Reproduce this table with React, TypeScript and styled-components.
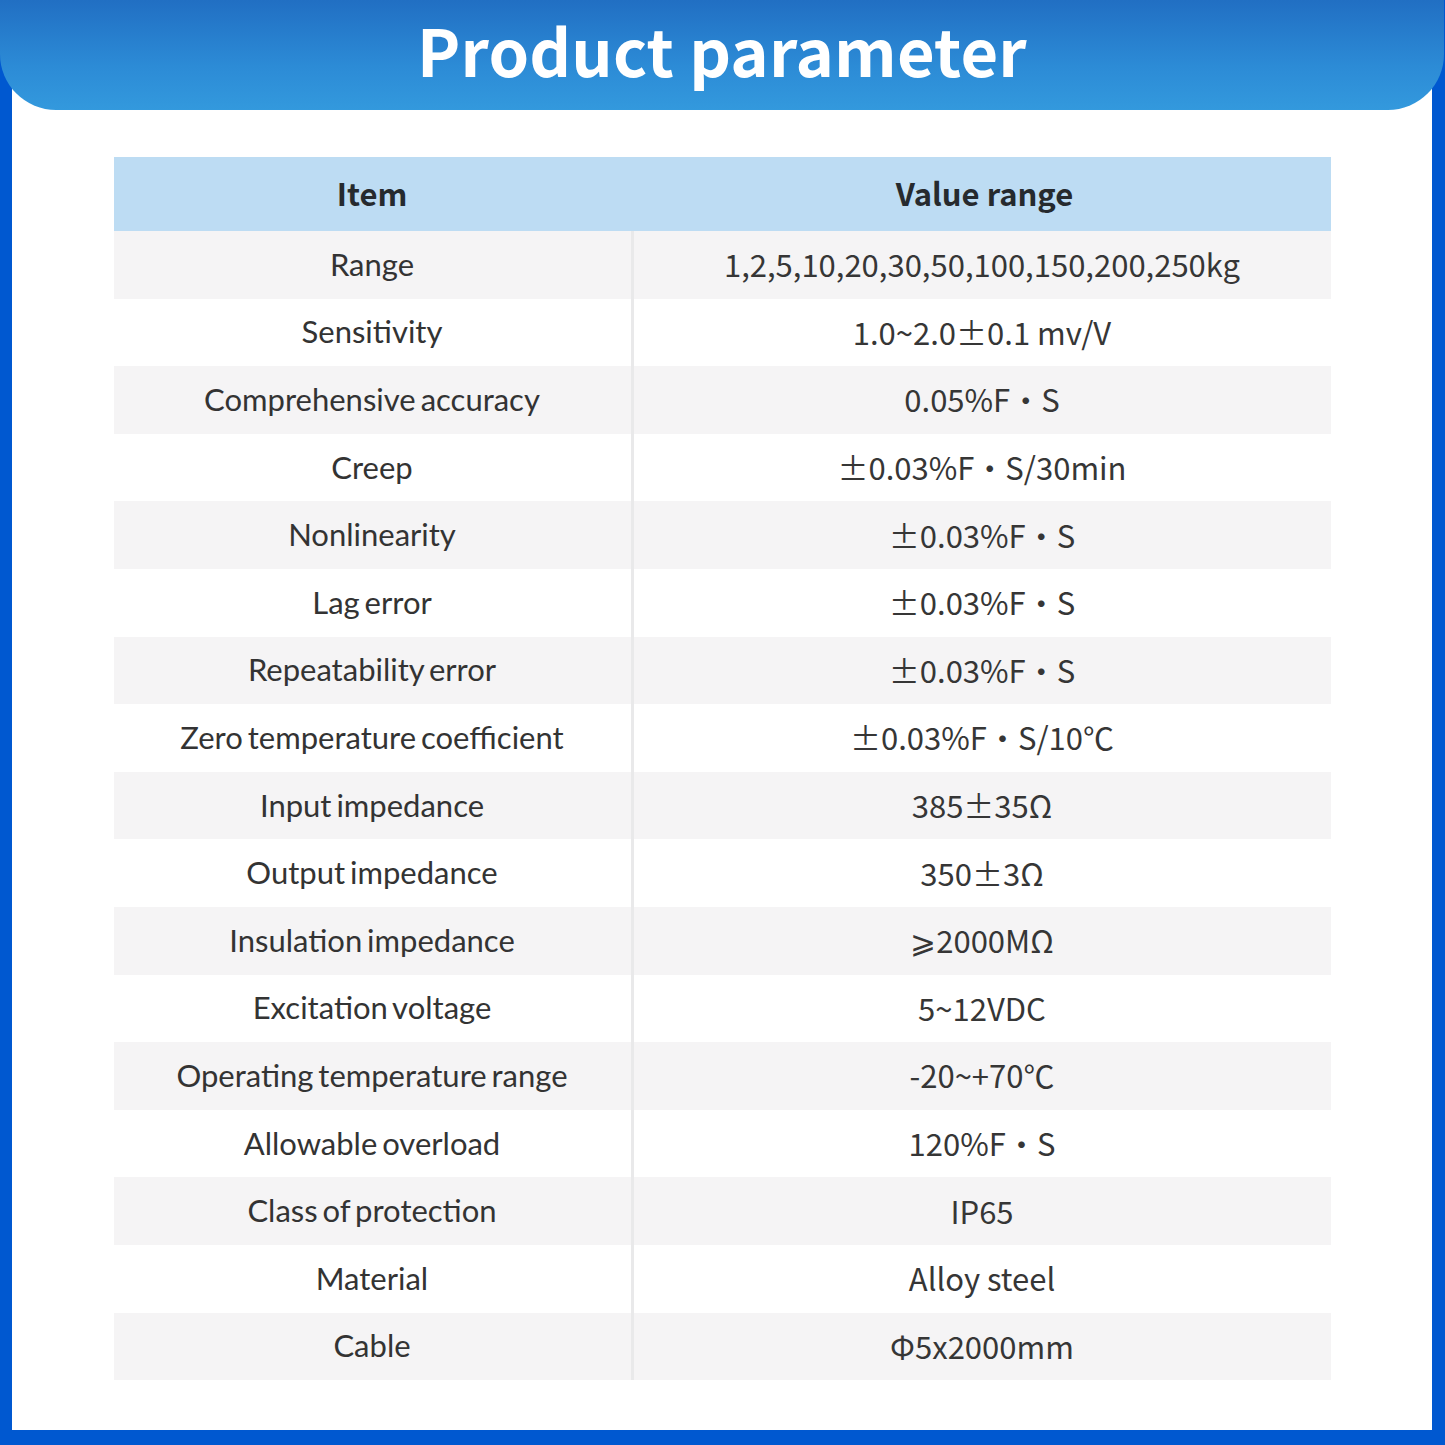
import { createGlobalStyle, styled } from "styled-components";

const rows: [string, string][] = [
	["Range", "1,2,5,10,20,30,50,100,150,200,250kg"],
	["Sensitivity", "1.0~2.0±0.1 mv/V"],
	["Comprehensive accuracy", "0.05%F・S"],
	["Creep", "±0.03%F・S/30min"],
	["Nonlinearity", "±0.03%F・S"],
	["Lag error", "±0.03%F・S"],
	["Repeatability error", "±0.03%F・S"],
	["Zero temperature coefficient", "±0.03%F・S/10℃"],
	["Input impedance", "385±35Ω"],
	["Output impedance", "350±3Ω"],
	["Insulation impedance", "⩾2000MΩ"],
	["Excitation voltage", "5~12VDC"],
	["Operating temperature range", "-20~+70℃"],
	["Allowable overload", "120%F・S"],
	["Class of protection", "IP65"],
	["Material", "Alloy steel"],
	["Cable", "Φ5x2000mm"],
];

export default function App() {
	return (
		<>
			<GlobalStyle />
			<Frame>
				<Sheet>
					<Banner>
						<Title>Product parameter</Title>
					</Banner>
					<Table>
						<HeadRow>
							<HeadCell>Item</HeadCell>
							<HeadCell>Value range</HeadCell>
						</HeadRow>
						{rows.map(([item, value], i) => (
							<Row key={item} $shaded={i % 2 === 0}>
								<ItemCell>{item}</ItemCell>
								<ValueCell>{value}</ValueCell>
							</Row>
						))}
					</Table>
				</Sheet>
			</Frame>
		</>
	);
}

const GlobalStyle = createGlobalStyle`
	html, body {
		margin: 0;
		padding: 0;
	}
	body {
		font-family: "Noto Sans CJK SC", "Noto Sans", sans-serif;
	}
`;

const Frame = styled.div`
	width: 1445px;
	height: 1445px;
	box-sizing: border-box;
	background: #0058d0;
	padding: 0 13px 15px 12px;
	display: flex;
`;

const Sheet = styled.div`
	flex: 1;
	background: #fff;
	display: flex;
	flex-direction: column;
	align-items: center;
`;

const Banner = styled.div`
	align-self: stretch;
	margin: 0 -12px;
	height: 110px;
	border-radius: 0 0 56px 56px;
	background: linear-gradient(180deg, #216fc3 0%, #2c8bd6 60%, #3399dd 100%);
	display: flex;
	align-items: center;
	justify-content: center;
`;

const Title = styled.h1`
	margin: 0 0 12px 0;
	font-family: "Noto Sans CJK SC", "Noto Sans", sans-serif;
	font-weight: 700;
	font-size: 65px;
	line-height: 1;
	color: #fff;
	letter-spacing: 0.2px;
`;

const Table = styled.div`
	margin-top: 47px;
	width: 1217px;
	display: flex;
	flex-direction: column;
`;

const HeadRow = styled.div`
	display: grid;
	grid-template-columns: 517px 1fr;
	height: 74px;
	background: #bddcf3;
	align-items: center;
`;

const HeadCell = styled.div`
	text-align: center;
	font-family: "Noto Sans CJK SC", "Noto Sans", sans-serif;
	font-weight: 700;
	font-size: 31px;
	color: #262a2e;
	padding-bottom: 4px;

	&:last-child {
		padding-left: 8px;
	}
`;

const Row = styled.div<{ $shaded: boolean }>`
	display: grid;
	grid-template-columns: 517px 1fr;
	height: 67.6px;
	background: ${(p) => (p.$shaded ? "#f5f4f5" : "#fff")};
`;

const ItemCell = styled.div`
	display: flex;
	align-items: center;
	justify-content: center;
	font-family: Lato, "Noto Sans", sans-serif;
	font-size: 31px;
	color: #333;
	letter-spacing: 0;
	word-spacing: -3px;
	padding-bottom: 2px;
`;

const ValueCell = styled.div`
	display: flex;
	align-items: center;
	justify-content: center;
	border-left: 3px solid #e9e9ea;
	font-family: "Noto Sans CJK SC", "Noto Sans", sans-serif;
	font-size: 31px;
	color: #363636;
	padding-bottom: 2px;
`;
